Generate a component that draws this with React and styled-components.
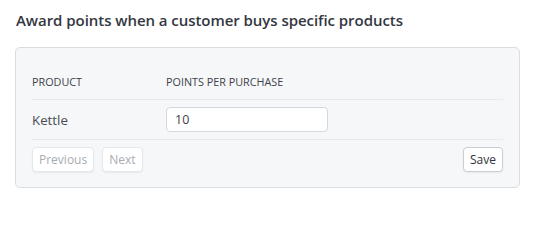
import React from "react";
import styled, { createGlobalStyle } from "styled-components";

const GlobalStyle = createGlobalStyle`
  body {
    margin: 0;
    background: #ffffff;
    font-family: "Open Sans", "Noto Sans", sans-serif;
    color: #3a3f47;
  }
`;

const Page = styled.div`
  padding: 10px 27px 0 15px;
`;

const Title = styled.h2`
  margin: 0 0 17px 1px;
  font-size: 15px;
  line-height: 20px;
  font-weight: 600;
  letter-spacing: -0.05px;
  color: #33373f;
`;

const Card = styled.div`
  background: #f6f7f9;
  border: 1px solid #d9dde2;
  border-radius: 5px;
  padding: 16px 16px 15px;
`;

const Row = styled.div`
  display: grid;
  grid-template-columns: 134px 162px 1fr;
  align-items: center;
  height: ${({ $h }) => $h}px;
  border-bottom: 1px solid #e6e9ed;
`;

const HeadCell = styled.div`
  font-size: 10.8px;
  text-transform: uppercase;
  color: #3d424a;
`;

const Cell = styled.div`
  font-size: 13.3px;
  color: #474c54;
`;

const Input = styled.input`
  box-sizing: border-box;
  width: 162px;
  height: 25px;
  padding: 0 8px;
  border: 1px solid #d3d8de;
  border-radius: 4px;
  background: #fff;
  font-family: inherit;
  font-size: 12.5px;
  color: #3a3f47;
  outline: none;
`;

const Footer = styled.div`
  display: flex;
  align-items: center;
  gap: 8px;
  padding-top: 7px;
`;

const Button = styled.button`
  height: 25px;
  padding: 0 6px;
  border: 1px solid ${({ disabled }) => (disabled ? "#e4e7eb" : "#c9ced4")};
  border-radius: 4px;
  background: #fff;
  box-shadow: 0 1px 2px rgba(0, 0, 0, 0.06);
  font-family: inherit;
  font-size: 12px;
  color: ${({ disabled }) => (disabled ? "#a7acb3" : "#2f333a")};
  cursor: ${({ disabled }) => (disabled ? "default" : "pointer")};
  margin-left: ${({ $push }) => ($push ? "auto" : "0")};
`;

export default function App() {
  return (
    <>
      <GlobalStyle />
      <Page>
        <Title>Award points when a customer buys specific products</Title>
        <Card>
          <Row $h={35}>
            <HeadCell>Product</HeadCell>
            <HeadCell>Points per purchase</HeadCell>
          </Row>
          <Row $h={39}>
            <Cell>Kettle</Cell>
            <Input defaultValue="10" />
          </Row>
          <Footer>
            <Button disabled>Previous</Button>
            <Button disabled>Next</Button>
            <Button $push>Save</Button>
          </Footer>
        </Card>
      </Page>
    </>
  );
}
